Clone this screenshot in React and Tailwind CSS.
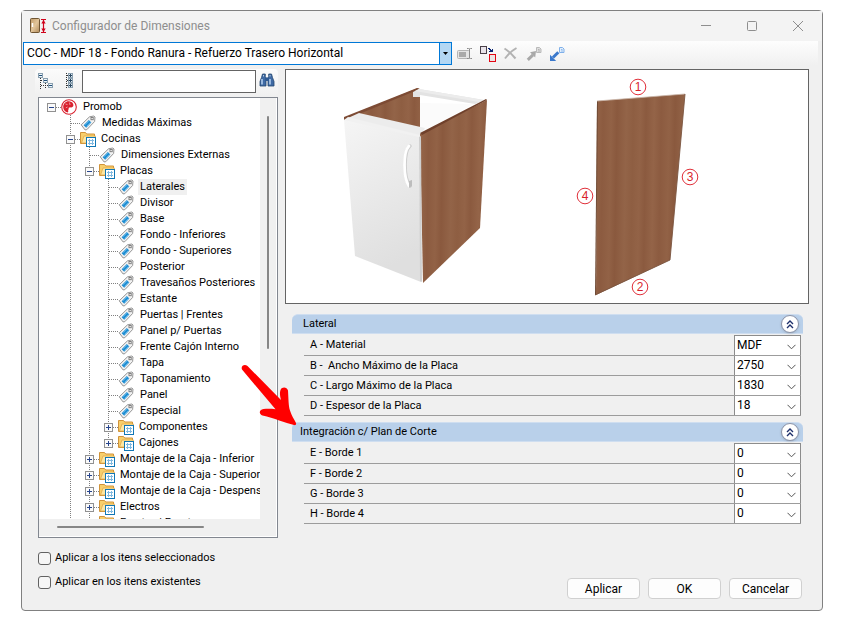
import React, { useState } from 'react';

const tree = [
  { text: 'Promob', level: 0, icon: 'logo', box: '-', last: true },
  { text: 'Medidas Máximas', level: 1, icon: 'tag' },
  { text: 'Cocinas', level: 1, icon: 'folder', box: '-' },
  { text: 'Dimensiones Externas', level: 2, icon: 'tag' },
  { text: 'Placas', level: 2, icon: 'folder', box: '-' },
  { text: 'Laterales', level: 3, icon: 'tag' },
  { text: 'Divisor', level: 3, icon: 'tag' },
  { text: 'Base', level: 3, icon: 'tag' },
  { text: 'Fondo - Inferiores', level: 3, icon: 'tag' },
  { text: 'Fondo - Superiores', level: 3, icon: 'tag' },
  { text: 'Posterior', level: 3, icon: 'tag' },
  { text: 'Travesaños Posteriores', level: 3, icon: 'tag' },
  { text: 'Estante', level: 3, icon: 'tag' },
  { text: 'Puertas | Frentes', level: 3, icon: 'tag' },
  { text: 'Panel p/ Puertas', level: 3, icon: 'tag' },
  { text: 'Frente Cajón Interno', level: 3, icon: 'tag' },
  { text: 'Tapa', level: 3, icon: 'tag' },
  { text: 'Taponamiento', level: 3, icon: 'tag' },
  { text: 'Panel', level: 3, icon: 'tag' },
  { text: 'Especial', level: 3, icon: 'tag' },
  { text: 'Componentes', level: 3, icon: 'folder', box: '+' },
  { text: 'Cajones', level: 3, icon: 'folder', box: '+', last: true },
  { text: 'Montaje de la Caja - Inferior', level: 2, icon: 'folder', box: '+' },
  { text: 'Montaje de la Caja - Superior', level: 2, icon: 'folder', box: '+' },
  { text: 'Montaje de la Caja - Despensas', level: 2, icon: 'folder', box: '+' },
  { text: 'Electros', level: 2, icon: 'folder', box: '+' },
  { text: 'Frentes | Puertas', level: 2, icon: 'folder', box: '+' },
];

const sections = [
  {
    title: 'Lateral',
    indent: 'pl-[11px]',
    rows: [
      { id: 'a', label: 'A - Material', options: ['MDF', 'MDP'] },
      { id: 'b', label: 'B -  Ancho Máximo de la Placa', options: ['2750', '2440'] },
      { id: 'c', label: 'C - Largo Máximo de la Placa', options: ['1830', '1220'] },
      { id: 'd', label: 'D - Espesor de la Placa', options: ['18', '15'] },
    ],
  },
  {
    title: 'Integración c/ Plan de Corte',
    indent: 'pl-2',
    rows: [
      { id: 'e', label: 'E - Borde 1', options: ['0', '1', '2'] },
      { id: 'f', label: 'F - Borde 2', options: ['0', '1', '2'] },
      { id: 'g', label: 'G - Borde 3', options: ['0', '1', '2'] },
      { id: 'h', label: 'H - Borde 4', options: ['0', '1', '2'] },
    ],
  },
];

function DoorIcon() {
  return (
    <svg width="18" height="16" viewBox="0 0 18 16" className="shrink-0">
      <defs>
        <linearGradient id="door" x1="0" x2="1" y1="0" y2="1">
          <stop offset="0" stopColor="#c09a68" />
          <stop offset="0.5" stopColor="#e2c59a" />
          <stop offset="1" stopColor="#b08a5a" />
        </linearGradient>
      </defs>
      <rect x="0.5" y="0.5" width="9" height="14" rx="1" fill="url(#door)" stroke="#6f5532" />
      <path d="M2.5 5v4" stroke="#fff" strokeWidth="1.5" />
      <path d="M11 1.5h5M11 14.5h5M13.5 2v12" stroke="#d0021b" strokeWidth="1.2" />
      <path d="M13.5 2l-2.2 3.5h4.4zM13.5 14l-2.2-3.5h4.4z" fill="#d0021b" />
    </svg>
  );
}

function LogoIcon() {
  return (
    <svg width="16" height="16" viewBox="0 0 16 16" className="shrink-0">
      <circle cx="8" cy="8" r="7.3" fill="#fff" stroke="#d9222f" strokeWidth="1.1" />
      <path d="M8 2.2C4.800 2 2.200 4.600 2.200 8c0 2.800 1.800 4.900 4.300 5.600 1.100-.6.900-1.800.4-2.800 1-.2 1-1.100.6-1.900l1.500-.7c1.800.6 3.200-.2 3.400-1.600C12.600 4.200 10.800 2.400 8 2.200z" fill="#d9222f" />
      <path d="M4.500 5l2 .6M8.500 3.600l.5 2.400M4.800 8.800l1.800-.8" stroke="#f6b4b8" strokeWidth="0.8" />
    </svg>
  );
}

function TagIcon() {
  return (
    <svg width="16" height="16" viewBox="0 0 16 16" className="shrink-0">
      <path d="M1.200 9.800L9.500 1.800l4.300-.8 1.200 1-.4 4.500-7.800 8.200-1.800.200z" fill="#f2f2f2" stroke="#8a8a8a" strokeWidth="0.9" strokeLinejoin="round" />
      <path d="M3.600 10.200l5.200-5.200 2.600 2.600-5.200 5.200z" fill="#1e8dd2" />
      <path d="M5 9.800l4-4M6.600 11.400l4-4" stroke="#8ed0f5" strokeWidth="0.6" />
      <rect x="11" y="2.500" width="2.200" height="2.200" fill="#fff" stroke="#777" strokeWidth="0.9" />
    </svg>
  );
}

function FolderIcon() {
  return (
    <svg width="16" height="16" viewBox="0 0 16 16" className="shrink-0">
      <path d="M.5 12.500V1.500h5l1.200 1.500h7.800v9.500z" fill="#f8cf6c" stroke="#d0933a" />
      <path d="M1.500 12l2.500-7h11.500L13 12z" fill="#fde6a2" stroke="#dda344" strokeWidth="0.7" />
      <rect x="6.500" y="6.500" width="9" height="9" fill="#fff" stroke="#1177b5" />
      <path d="M8 9.500h6M8 12.500h6M9.500 8v6M12.500 8v6" stroke="#7fb9e0" />
    </svg>
  );
}

const icons = { logo: LogoIcon, tag: TagIcon, folder: FolderIcon };

// one 19px cell of dotted guide lines, with the +/- box where the node has children
function Guide({ up = true, down = true, branch = false, box }) {
  return (
    <svg width="19" height="16" viewBox="0 0 19 16" className="shrink-0" shapeRendering="crispEdges">
      {up && <path d="M9.500 0v8" stroke="#808080" strokeDasharray="1 1" />}
      {down && <path d="M9.500 8v8" stroke="#808080" strokeDasharray="1 1" />}
      {branch && <path d="M10 8.500h9" stroke="#808080" strokeDasharray="1 1" />}
      {box && (
        <g>
          <rect x="5.500" y="4.500" width="8" height="8" fill="#fafafa" stroke="#919191" />
          <path d="M7 8.500h5" stroke="#26448c" />
          {box === '+' && <path d="M9.500 6v5" stroke="#26448c" />}
        </g>
      )}
    </svg>
  );
}

function TreeRow({ node, selected, onSelect }) {
  const Icon = icons[node.icon];
  const parents = Array.from({ length: node.level });
  return (
    <li className="flex h-4 items-center whitespace-nowrap">
      {parents.map((_, i) => (
        <Guide key={i} up={i > 0} down={i > 0} />
      ))}
      <Guide up={node.level > 0} down={!node.last} branch box={node.box} />
      <Icon />
      <button
        type="button"
        onClick={onSelect}
        className={`h-4 px-[2px] text-[11px] leading-4 ${node.icon === 'folder' ? 'ml-[3px]' : 'ml-1'} ${selected ? 'bg-[#f0f0f0]' : ''}`}
      >
        {node.text}
      </button>
    </li>
  );
}

function ToolButton({ label, children }) {
  return (
    <button type="button" aria-label={label} className="flex h-5 w-[23px] shrink-0 items-center justify-center">
      {children}
    </button>
  );
}

function Toolbar() {
  return (
    <div className="mr-1 flex flex-1 items-center bg-linear-to-b from-[#fdfdfd] to-[#f0f0f0] pl-px">
      <ToolButton label="Renombrar">
        <svg width="16" height="14" viewBox="0 0 16 14">
          <rect x="0.500" y="3.500" width="12" height="8" rx="1" fill="#e4e4e4" stroke="#b4b4b4" />
          <rect x="2" y="5" width="7" height="5" fill="#a9a9a9" />
          <path d="M12.500 1.500v10M10 1.500h1.500l1 .7 1-.7H15M10 11.500h1.500l1-.7 1 .7H15" fill="none" stroke="#8d8d8d" />
        </svg>
      </ToolButton>
      <ToolButton label="Duplicar">
        <svg width="16" height="16" viewBox="0 0 16 16" shapeRendering="crispEdges">
          <rect x="0.500" y="0.500" width="6" height="7" fill="#e8e4ea" stroke="#4a4048" />
          <path d="M8 2h2v1h1v1h1V3h1v3h-4V5h1V4H9V3H8z" fill="#0a2472" />
          <rect x="9.500" y="8.500" width="6" height="7" fill="#ece4e4" stroke="#e30613" />
        </svg>
      </ToolButton>
      <ToolButton label="Eliminar">
        <svg width="15" height="13" viewBox="0 0 15 13">
          <path d="M1.500 1.500c4 2.500 8 6.500 11 10M13.500 1C9 3.500 5 7.500 2 11.500" fill="none" stroke="#b2b2b2" strokeWidth="2" />
        </svg>
      </ToolButton>
      <ToolButton label="Exportar">
        <svg width="16" height="16" viewBox="0 0 16 16">
          <path d="M1.800 13.800L7 8.800" stroke="#a8a8a8" strokeWidth="3" />
          <path d="M10 5l-6 1.200 5.200 5.200z" fill="#a8a8a8" />
          <path d="M10.500 1.500h3l1.500 1.500v3.500h-4.500z" fill="#dedede" stroke="#b9b9b9" />
          <path d="M12 3.500h1.500M12 5h2" stroke="#aaa" strokeWidth="0.800" />
        </svg>
      </ToolButton>
      <ToolButton label="Importar">
        <svg width="16" height="16" viewBox="0 0 16 16">
          <path d="M9.300 6.200L4 11.500" stroke="#3a78cc" strokeWidth="3" />
          <path d="M1 15V8.800L7.200 15z" fill="#3a78cc" />
          <path d="M10.500 1.500h3l1.500 1.500v3.500h-4.500z" fill="#e3effc" stroke="#7fb0ea" />
          <path d="M12 3.500h1.500M12 5h2" stroke="#7fb0ea" strokeWidth="0.800" />
        </svg>
      </ToolButton>
    </div>
  );
}

function ExpandIcon() {
  return (
    <svg width="16" height="16" viewBox="0 0 16 16" shapeRendering="crispEdges">
      <path d="M2.500 5v11M3 7.500h3M3 12.500h7M7.500 10v6" stroke="#333" strokeDasharray="1 1" />
      <rect x="0.500" y="0.500" width="4" height="4" fill="#eef4f8" stroke="#8aa0b0" />
      <rect x="5.500" y="5.500" width="4" height="4" fill="#eef4f8" stroke="#8aa0b0" />
      <rect x="10.500" y="10.500" width="4" height="4" fill="#eef4f8" stroke="#8aa0b0" />
      <path d="M1 2.500h3M6 7.500h3M11 12.500h3" stroke="#1f4e79" />
    </svg>
  );
}

function CollapseIcon() {
  return (
    <svg width="10" height="16" viewBox="0 0 10 16" shapeRendering="crispEdges">
      <path d="M1.500 0v16M2 2.500h2M2 7.500h2M2 12.500h2" stroke="#333" strokeDasharray="1 1" />
      {[0, 5, 10].map((y) => (
        <g key={y}>
          <rect x="3.500" y={y + 0.5} width="4" height="4" fill="#dfe9f0" stroke="#8aa0b0" />
          <path d={`M4 ${y + 2.5}h3M5.500 ${y + 1}v3`} stroke="#26455f" />
        </g>
      ))}
    </svg>
  );
}

function BinocularsIcon() {
  return (
    <svg width="16" height="14" viewBox="0 0 16 14">
      <path d="M3.500 1h2.800v2.500L7 5v8H1V8.500l1.500-4zM12.500 1H9.700v2.500L9 5v8h6V8.500l-1.500-4z" fill="#3f6aa4" stroke="#24466f" strokeWidth="0.800" />
      <rect x="6.500" y="4.500" width="3" height="3.500" fill="#2f5a94" />
      <path d="M3 6v5.500M11 6v5.500" stroke="#b8d2f0" strokeWidth="1.500" />
      <path d="M4.500 2v1.500M11 2v1.500" stroke="#c5d9f0" strokeWidth="0.900" />
    </svg>
  );
}

function Marker({ x, y, n }) {
  return (
    <g>
      <circle cx={x} cy={y} r="7.800" fill="#fff" stroke="#e0303a" />
      <text x={x} y={y + 4} textAnchor="middle" fontSize="12" fill="#d81e2a" fontFamily="Liberation Sans, sans-serif">{n}</text>
    </g>
  );
}

function Preview() {
  return (
    <div className="border border-[#646464] bg-white">
      <svg viewBox="0 0 522 233" className="block w-full" role="img" aria-label="Lateral">
        <defs>
          <linearGradient id="wood" gradientUnits="userSpaceOnUse" x1="0" x2="58" y1="0" y2="1" spreadMethod="repeat">
            <stop offset="0" stopColor="#8e5e42" />
            <stop offset="0.120" stopColor="#936347" />
            <stop offset="0.220" stopColor="#8b5a3f" />
            <stop offset="0.360" stopColor="#946448" />
            <stop offset="0.480" stopColor="#8c5b40" />
            <stop offset="0.620" stopColor="#926246" />
            <stop offset="0.720" stopColor="#8a593e" />
            <stop offset="0.880" stopColor="#936448" />
            <stop offset="1" stopColor="#8e5e42" />
          </linearGradient>
          <linearGradient id="front" x1="0" x2="0.300" y1="0" y2="1">
            <stop offset="0" stopColor="#f5f5f5" />
            <stop offset="1" stopColor="#dfdfdf" />
          </linearGradient>
        </defs>
        {/* cabinet */}
        <path d="M59 48L132 18l2 2v38L73 44z" fill="url(#wood)" />
        <path d="M58 47L131 18l3 1-73 30-3 1z" fill="#7d4b34" />
        <path d="M134 33l54 1-51 27-3-3z" fill="#fbfbfb" />
        <path d="M127 22l6-3 65 11-9 4-55-9v2h-7z" fill="#e3e3e3" />
        <path d="M133 19l65 11-5 2-64-11z" fill="#ececec" />
        <path d="M62 48l11-5 66 15-5 8z" fill="#ececec" />
        <path d="M134 64l67-34-7 128-57 55z" fill="url(#wood)" />
        <path d="M134 63l66-34 1 1-65 35z" fill="#6f402b" />
        <path d="M58 50l4-3 72 18v3L58 51z" fill="#f1f1f1" />
        <path d="M58 50l75 17 2 145-66-26z" fill="url(#front)" />
        <path d="M133 67l2-1 1 146-2-1z" fill="#cfcfcf" />
        <path d="M124 76c-6 5-7 31 0 40" fill="none" stroke="#cdcdcd" strokeWidth="3.500" strokeLinecap="round" />
        <path d="M123 76c-6 6-6 31 0 40" fill="none" stroke="#fff" strokeWidth="2.800" strokeLinecap="round" />
        <path d="M123 111l3-1v6l-3 2z" fill="#bdbdbd" />
        {/* lateral panel */}
        <path d="M311 31l88-7-15 166-74 35z" fill="url(#wood)" />
        <path d="M311 31l-2 194 1 0L312 31z" fill="#6f4a35" />
        <path d="M311 31l88-7" stroke="#c9b5a8" strokeWidth="0.800" />
        <path d="M309 225l75-35 15-166" fill="none" stroke="#7b5540" strokeWidth="0.900" />
        <Marker x={352} y={17} n="1" />
        <Marker x={354} y={217} n="2" />
        <Marker x={404} y={107} n="3" />
        <Marker x={299} y={126} n="4" />
      </svg>
    </div>
  );
}

function PropertyRow({ row, first }) {
  return (
    <div className="flex items-stretch border-b border-[#9c9c9c]">
      <label htmlFor={row.id} className="flex-1 self-center whitespace-pre pl-[6px] text-[11px] leading-4">
        {row.label}
      </label>
      <div className={`relative w-[67px] border-x border-[#8c8c8c] bg-white ${first ? 'border-t' : ''}`}>
        <select id={row.id} className="block h-[19px] w-full appearance-none pb-[2px] pl-[2px] text-[12px] leading-4 outline-none">
          {row.options.map((o) => (
            <option key={o}>{o}</option>
          ))}
        </select>
        <svg width="9" height="6" viewBox="0 0 9 6" className="pointer-events-none absolute right-1 top-2">
          <path d="M0.500 0.800l4 4 4-4" fill="none" stroke="#555" />
        </svg>
      </div>
    </div>
  );
}

function Section({ section }) {
  const [open, setOpen] = useState(true);
  return (
    <section className="mb-[6px]">
      <div className={`flex h-5 items-center justify-between rounded-t-md border-y border-[#cfdef0] bg-[#b9d0ea] pr-1 ${section.indent}`}>
        <h2 className="text-[11px] leading-4">{section.title}</h2>
        <button
          type="button"
          aria-label={`Contraer ${section.title}`}
          onClick={() => setOpen(!open)}
          className="flex size-[18px] items-center justify-center rounded-full border border-[#8b93a8] bg-white shadow-sm"
        >
          <svg width="8" height="9" viewBox="0 0 8 9">
            <path d="M1 4l3-3 3 3M1 8l3-3 3 3" fill="none" stroke="#1d2f6b" strokeWidth="1.400" />
          </svg>
        </button>
      </div>
      {open && (
        <div className="ml-3 mr-[2px] mt-px">
          {section.rows.map((row, i) => (
            <PropertyRow key={row.id} row={row} first={i === 0} />
          ))}
        </div>
      )}
    </section>
  );
}

function CheckOption({ children }) {
  return (
    <label className="flex h-6 items-center gap-1 text-[11px] leading-4">
      <input type="checkbox" className="size-[13px] appearance-none rounded-[3px] border border-[#626262] bg-[#f6f6f6] checked:bg-[#0067c0]" />
      {children}
    </label>
  );
}

export default function App() {
  const [selected, setSelected] = useState('Laterales');

  return (
    <div className="flex min-h-screen flex-col bg-white pb-[19px] pl-[21px] pr-[19px] pt-[10px] font-[Roboto,'Liberation_Sans',sans-serif] text-black">
      <div className="relative flex flex-1 flex-col rounded-sm border border-[#808080] bg-[#f0f0f0]">
        <header className="flex h-[30px] items-center bg-[#f3f3f3] pl-2 pr-px text-[#8e8e8e]">
          <DoorIcon />
          <h1 className="ml-1 flex-1 text-[12px] leading-4">Configurador de Dimensiones</h1>
          <button type="button" aria-label="Minimizar" className="flex h-full w-[46px] items-center justify-center">
            <svg width="10" height="10" viewBox="0 0 10 10"><path d="M0 4.500h10" stroke="currentColor" /></svg>
          </button>
          <button type="button" aria-label="Maximizar" className="flex h-full w-[46px] items-center justify-center">
            <svg width="10" height="10" viewBox="0 0 10 10"><rect x="0.500" y="0.500" width="9" height="9" rx="1" fill="none" stroke="currentColor" /></svg>
          </button>
          <button type="button" aria-label="Cerrar" className="flex h-full w-[46px] items-center justify-center">
            <svg width="10" height="10" viewBox="0 0 10 10"><path d="M0 0l10 10M10 0L0 10" stroke="currentColor" /></svg>
          </button>
        </header>

        <div className="flex h-[25px] pl-px">
          <div className="relative my-px w-[429px]">
            <select aria-label="Configuración" className="block h-full w-full appearance-none border border-[#0078d7] bg-white pb-[2px] pl-[3px] text-[12px] leading-4 outline-none">
              <option>COC - MDF 18 - Fondo Ranura - Refuerzo Trasero Horizontal</option>
            </select>
            <span className="pointer-events-none absolute inset-y-0 right-0 flex w-[13px] items-center justify-center border border-[#0078d7] bg-[#b3d7f3]">
              <svg width="5" height="3" viewBox="0 0 5 3"><path d="M0 0h5L2.500 3z" /></svg>
            </span>
          </div>
          <Toolbar />
        </div>

        <div className="flex flex-1 gap-[7px] pt-[3px]">
          <div className="flex w-[256px] shrink-0 flex-col pl-4">
            <div className="-ml-[3px] flex h-[27px] items-start rounded bg-linear-to-b from-[#fbfbfb] to-[#f0f0f0] pt-px">
              <button type="button" aria-label="Expandir" className="flex h-[22px] w-[22px] items-center justify-center"><ExpandIcon /></button>
              <button type="button" aria-label="Contraer" className="flex h-[22px] w-[25px] items-center justify-center"><CollapseIcon /></button>
              <input type="text" aria-label="Buscar" className="h-[23px] w-0 flex-1 border border-[#646464] bg-white px-1 text-[11px] outline-none" />
              <button type="button" aria-label="Encontrar" className="flex h-5 w-[22px] items-center justify-center"><BinocularsIcon /></button>
            </div>

            <div className="mt-px flex flex-1 flex-col border border-[#828790] bg-white pb-px pr-px">
              <div className="flex flex-1">
                <div className="min-h-[200px] w-0 flex-1 basis-0 overflow-hidden">
                  <ul className="h-0 min-h-full overflow-hidden pl-[3px] pt-px">
                    {tree.map((node) => (
                      <TreeRow key={node.text} node={node} selected={node.text === selected} onSelect={() => setSelected(node.text)} />
                    ))}
                  </ul>
                </div>
                <div className="flex w-4 justify-center bg-[#f0f0f0] pt-[18px]">
                  <span className="h-[233px] w-[2px] rounded-full bg-[#868686]" />
                </div>
              </div>
              <div className="flex h-[17px] bg-[#f0f0f0] pl-[18px] pt-[7px]">
                <span className="h-[2px] w-[147px] rounded-full bg-[#868686]" />
              </div>
            </div>

            <div className="pb-4 pt-2">
              <CheckOption>Aplicar a los itens seleccionados</CheckOption>
              <CheckOption>Aplicar en los itens existentes</CheckOption>
            </div>
          </div>

          <main className="flex min-w-0 flex-1 flex-col pr-[13px]">
            <Preview />
            <div className="mt-[10px] pl-[7px] pr-[6px]">
              {sections.map((section) => (
                <Section key={section.title} section={section} />
              ))}
            </div>
            <div className="mt-auto flex justify-end gap-2 pb-[11px] pr-[7px]">
              {['Aplicar', 'OK', 'Cancelar'].map((name) => (
                <button key={name} type="button" className="h-[21px] w-[73px] rounded border border-[#d0d0d0] bg-[#fdfdfd] text-[12px] leading-4">
                  {name}
                </button>
              ))}
            </div>
          </main>
        </div>

        {/* callout arrow over the tree and the second section */}
        <svg width="60" height="66" viewBox="0 0 60 66" className="pointer-events-none absolute left-[218px] top-[351px]">
          <path
            d="M2 7.500C0.500 4 4.500 1.500 7.500 4L41 38c-1-4-1.500-7-.5-10 1.500-3.500 6.500-3 7.500.500.500 8 .5 16 2 20 1.500 5 4 8.500 6 12.500.5 1.500-.5 2.500-2 2-9-2-20-7-31.500-9.500-4-1.500-3.500-6 1-6.500 4-.3 8-.3 12 .300z"
            fill="#ff0000"
          />
        </svg>
      </div>
    </div>
  );
}
